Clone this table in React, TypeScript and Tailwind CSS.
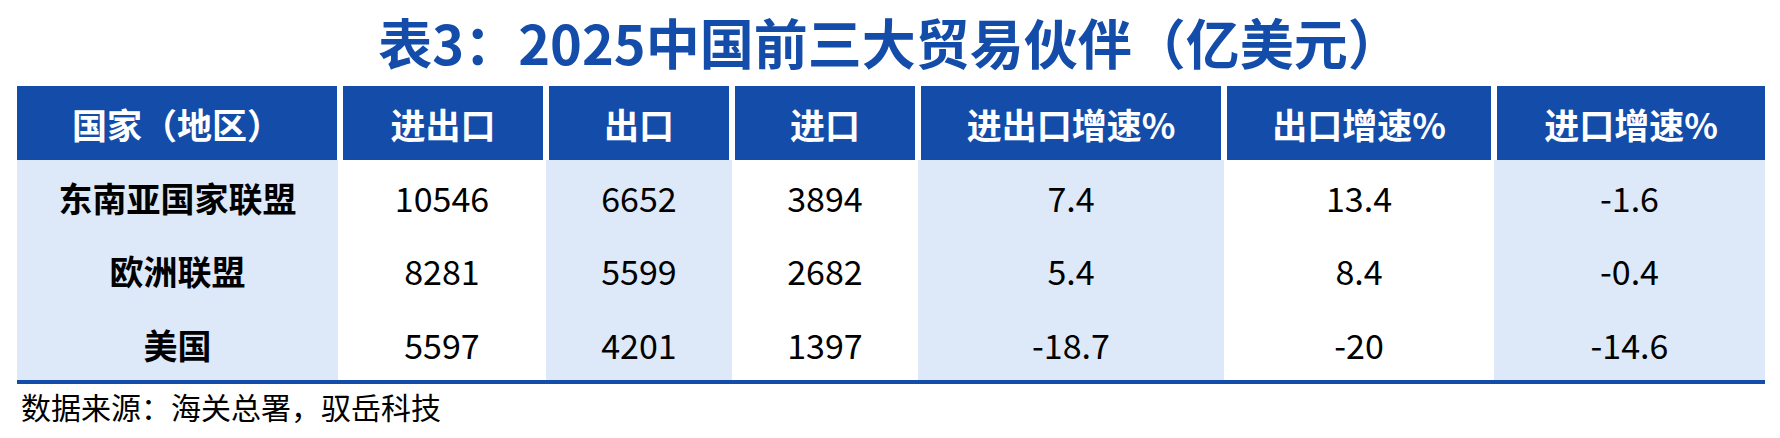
const headers = ["国家（地区）", "进出口", "出口", "进口", "进出口增速%", "出口增速%", "进口增速%"];

const rows = [
  ["东南亚国家联盟", "10546", "6652", "3894", "7.4", "13.4", "-1.6"],
  ["欧洲联盟", "8281", "5599", "2682", "5.4", "8.4", "-0.4"],
  ["美国", "5597", "4201", "1397", "-18.7", "-20", "-14.6"],
];

// light blue on odd columns, white on even ones
const shade = ["bg-[#dde9f9]", "bg-white", "bg-[#dde9f9]", "bg-white", "bg-[#dde9f9]", "bg-white", "bg-[#dde9f9]"];

export default function App() {
  return (
    <div
      className="w-[1780px] h-[438px] bg-white overflow-hidden"
      style={{ fontFamily: '"Noto Sans CJK SC", "Noto Sans", sans-serif' }}
    >
      <div className="h-[86px] pb-[3px] flex items-center justify-center">
        <h1 className="text-[54px] leading-none font-bold text-[#134ca9]">表3：2025中国前三大贸易伙伴（亿美元）</h1>
      </div>

      <div className="ml-[17px] w-[1748px]">
        <div className="grid grid-cols-[320px_200px_180px_180px_300px_264px_268px] gap-x-[6px]">
          {headers.map(h => (
            <div key={h} className="h-[74px] bg-[#134ca9] flex items-center justify-center">
              <span className="text-[35px] leading-none font-bold text-white">{h}</span>
            </div>
          ))}
        </div>

        <div className="grid grid-cols-[321px_208px_186px_186px_306px_270px_271px] grid-rows-[73px_74px_73px] border-b-4 border-[#134ca9]">
          {rows.map((r, ri) =>
            r.map((v, ci) => (
              <div key={`${ri}-${ci}`} className={`${shade[ci]} flex items-center justify-center pt-[2px]`}>
                <span className={`text-[34px] leading-none text-black ${ci === 0 ? "font-bold" : ""}`}>{v}</span>
              </div>
            ))
          )}
        </div>
      </div>

      <p className="mt-[7px] pl-[21px] text-[30px] leading-none text-black">数据来源：海关总署，驭岳科技</p>
    </div>
  );
}
